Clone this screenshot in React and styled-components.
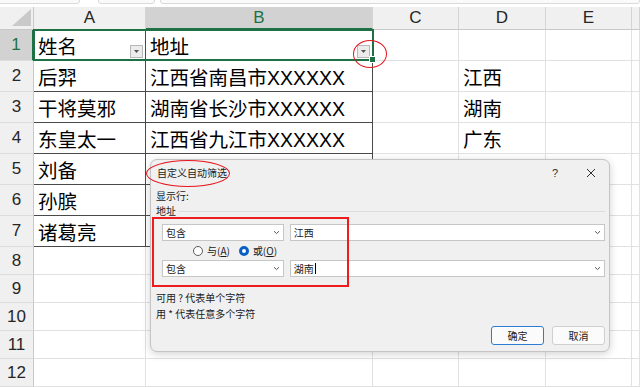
import React from "react";
import styled, { createGlobalStyle, css } from "styled-components";

const Global = createGlobalStyle`
  html, body { margin: 0; padding: 0; background: #fff; }
  body { width: 640px; height: 387px; overflow: hidden; }
`;

const Page = styled.div`
  position: relative;
  width: 640px;
  height: 387px;
  overflow: hidden;
  font-family: "Liberation Sans", "Noto Sans CJK SC", sans-serif;
`;

const TopStrip = styled.div`
  height: 7px;
  display: flex;
  gap: 5px;
  background: #fff;
  overflow: hidden;
`;

const StripBox = styled.div`
  width: ${(p) => p.$w}px;
  flex: ${(p) => (p.$w ? "none" : 1)};
  height: 5px;
  margin-top: -3px;
  border: 1px solid #dadada;
  border-radius: 3px;
  background: #fafafa;
  margin-left: ${(p) => p.$ml || 0}px;
`;

const SheetWrap = styled.div`
  position: relative;
`;

const Sheet = styled.div`
  display: grid;
  grid-template-columns: 34px 112px 227px 86px 87px 86px 1fr;
  grid-template-rows: 23px repeat(7, 31px) repeat(5, 28px);
`;

const Corner = styled.div`
  background: #f0f0f0;
  border-right: 1px solid #c8c8c8;
  border-bottom: 1px solid #c8c8c8;
  position: relative;
  &::after {
    content: "";
    position: absolute;
    right: 2px;
    bottom: 3px;
    border-left: 19px solid transparent;
    border-bottom: 17px solid #c9c9c9;
  }
`;

const ColHead = styled.div`
  display: flex;
  align-items: center;
  justify-content: center;
  font-size: 17px;
  color: #262626;
  background: #f0f0f0;
  border-right: 1px solid #d4d4d4;
  border-bottom: 1px solid #c8c8c8;
  ${(p) =>
    p.$active &&
    css`
      background: #d2d2d2;
      color: #1e7145;
      border-bottom: 2px solid #1e7145;
    `}
`;

const RowHead = styled.div`
  display: flex;
  align-items: center;
  justify-content: center;
  font-size: 17px;
  color: #262626;
  background: #f0f0f0;
  border-right: 1px solid #c8c8c8;
  border-bottom: 1px solid #dcdcdc;
  ${(p) =>
    p.$active &&
    css`
      background: #d2d2d2;
      color: #1e7145;
      border-right: 2px solid #1e7145;
    `}
`;

const Cell = styled.div`
  display: flex;
  align-items: center;
  padding-left: 4px;
  font-size: 19.5px;
  color: #000;
  white-space: nowrap;
  overflow: hidden;
  border-right: 1px solid #e1e1e1;
  border-bottom: 1px solid #e1e1e1;
  ${(p) =>
    p.$boxed &&
    css`
      border-right-color: #4a4a4a;
      border-bottom-color: #4a4a4a;
    `}
`;

/* green outline of the selected range A1:B1, drawn over the cells */
const Selection = styled.div`
  position: absolute;
  left: 33px;
  top: 22px;
  width: 341px;
  height: 32px;
  box-sizing: border-box;
  border: 2px solid #1e7145;
  pointer-events: none;
  &::after {
    content: "";
    position: absolute;
    right: -4px;
    bottom: -4px;
    width: 5px;
    height: 5px;
    background: #1e7145;
    border: 1px solid #fff;
  }
`;

const FilterBtn = styled.span`
  margin-left: auto;
  margin-right: 2px;
  align-self: flex-end;
  margin-bottom: 2px;
  width: 11px;
  height: 11px;
  flex-shrink: 0;
  border: 1px solid #b8b8b8;
  background: #ececec;
  display: flex;
  align-items: center;
  justify-content: center;
`;

const Ellipse = styled.div`
  position: absolute;
  border: 1.5px solid #e8141c;
  border-radius: 50%;
  pointer-events: none;
`;

const RedBox = styled.div`
  position: absolute;
  left: 152px;
  top: 217px;
  width: 197px;
  height: 70px;
  box-sizing: border-box;
  border: 2px solid #ee1c1c;
  pointer-events: none;
`;

const Dialog = styled.div`
  position: absolute;
  left: 150px;
  top: 159px;
  width: 460px;
  height: 193px;
  box-sizing: border-box;
  background: #f0f0f0;
  border: 1px solid #c4c4c4;
  border-radius: 7px;
  box-shadow: 0 2px 8px rgba(0, 0, 0, 0.18);
  font-family: "Noto Sans CJK SC", sans-serif;
  font-size: 10px;
  color: #1a1a1a;
  display: flex;
  flex-direction: column;
`;

const TitleBar = styled.div`
  height: 25px;
  display: flex;
  align-items: center;
  padding: 0 0 0 6px;
`;

const Title = styled.span`
  flex: 1;
`;

const TitleBtn = styled.span`
  width: 36px;
  display: flex;
  justify-content: center;
  color: #333;
  font-family: "Liberation Sans", sans-serif;
  font-size: 11px;
`;

const Body = styled.div`
  flex: 1;
  display: flex;
  flex-direction: column;
  padding: 0 4px 6px 5px;
`;

const Label = styled.div`
  height: 15px;
  line-height: 15px;
  margin-top: ${(p) => p.$top || 0}px;
`;

const Group = styled.div`
  display: flex;
  align-items: center;
  gap: 3px;
  height: 15px;
  &::after {
    content: "";
    flex: 1;
    height: 1px;
    background: #dcdcdc;
    margin-top: 1px;
  }
`;

const CondRow = styled.div`
  display: flex;
  gap: 6px;
  padding-left: 6px;
  margin-top: ${(p) => p.$top}px;
`;

const Combo = styled.div`
  width: ${(p) => p.$w}px;
  height: 17px;
  box-sizing: border-box;
  background: #fff;
  border: 1px solid #c6c6c6;
  display: flex;
  align-items: center;
  padding-left: 3px;
  font-size: 10px;
`;

const ComboText = styled.span`
  flex: 1;
  display: flex;
  align-items: center;
`;

const Caret = styled.span`
  width: 1px;
  height: 11px;
  background: #000;
  margin-left: 1px;
`;

const RadioRow = styled.div`
  display: flex;
  align-items: center;
  gap: 9px;
  padding-left: 37px;
  height: 19px;
`;

const RadioItem = styled.label`
  display: flex;
  align-items: center;
  gap: 4px;
`;

const RadioDot = styled.span`
  width: 10px;
  height: 10px;
  box-sizing: border-box;
  border-radius: 50%;
  border: 1px solid #5c5c5c;
  background: #fff;
  ${(p) =>
    p.$on &&
    css`
      border: 3.5px solid #0a5fc4;
      background: #fff;
    `}
`;

const Footer = styled.div`
  margin-top: auto;
  display: flex;
  justify-content: flex-end;
  gap: 8px;
`;

const Button = styled.button`
  width: 53px;
  height: 19px;
  box-sizing: border-box;
  border-radius: 3px;
  background: #fbfbfb;
  border: 1px solid ${(p) => (p.$primary ? "#2c7cd4" : "#cfcfcf")};
  font-family: "Noto Sans CJK SC", sans-serif;
  font-size: 10px;
  color: #1a1a1a;
  padding: 0;
`;

function Chevron() {
  return (
    <svg width="7" height="5" viewBox="0 0 7 5" style={{ marginRight: 3 }}>
      <path d="M1 1.2 L3.5 3.6 L6 1.2" fill="none" stroke="#555" strokeWidth="1" />
    </svg>
  );
}

function FilterArrow() {
  return (
    <svg width="5" height="3" viewBox="0 0 5 3">
      <path d="M0 0 H5 L2.5 3 Z" fill="#555" />
    </svg>
  );
}

const cols = ["A", "B", "C", "D", "E", ""];

const rows = [
  ["姓名", "地址", "", ""],
  ["后羿", "江西省南昌市XXXXXX", "", "江西"],
  ["干将莫邪", "湖南省长沙市XXXXXX", "", "湖南"],
  ["东皇太一", "江西省九江市XXXXXX", "", "广东"],
  ["刘备", "", "", ""],
  ["孙膑", "", "", ""],
  ["诸葛亮", "", "", ""],
];

export default function App() {
  return (
    <Page>
      <Global />
      <TopStrip>
        <StripBox $w={82} $ml={-4} />
        <StripBox $w={55} $ml={13} />
        <StripBox />
      </TopStrip>
      <SheetWrap>
        <Sheet>
          <Corner />
          {cols.map((c, i) => (
            <ColHead key={i} $active={c === "B"}>
              {c}
            </ColHead>
          ))}
          {Array.from({ length: 12 }).map((_, r) => {
            const data = rows[r] || ["", "", "", ""];
            return (
              <React.Fragment key={r}>
                <RowHead $active={r === 0}>{r + 1}</RowHead>
                <Cell $boxed={r < 7}>
                  {data[0]}
                  {r === 0 && (
                    <FilterBtn>
                      <FilterArrow />
                    </FilterBtn>
                  )}
                </Cell>
                <Cell $boxed={r < 7}>
                  {data[1]}
                  {r === 0 && (
                    <FilterBtn>
                      <FilterArrow />
                    </FilterBtn>
                  )}
                </Cell>
                <Cell>{data[2]}</Cell>
                <Cell>{data[3]}</Cell>
                <Cell />
                <Cell />
              </React.Fragment>
            );
          })}
        </Sheet>
        <Selection />
      </SheetWrap>

      <Ellipse style={{ left: 353, top: 40, width: 32, height: 26 }} />

      <Dialog>
        <TitleBar>
          <Title>自定义自动筛选</Title>
          <TitleBtn>?</TitleBtn>
          <TitleBtn>
            <svg width="10" height="10" viewBox="0 0 10 10">
              <path d="M1 1 L9 9 M9 1 L1 9" stroke="#333" strokeWidth="1" />
            </svg>
          </TitleBtn>
        </TitleBar>
        <Body>
          <Label $top={3}>显示行:</Label>
          <Group>地址</Group>
          <CondRow $top={6}>
            <Combo $w={122}>
              <ComboText>包含</ComboText>
              <Chevron />
            </Combo>
            <Combo $w={316}>
              <ComboText>江西</ComboText>
              <Chevron />
            </Combo>
          </CondRow>
          <RadioRow>
            <RadioItem>
              <RadioDot />
              <span>
                与(<u>A</u>)
              </span>
            </RadioItem>
            <RadioItem>
              <RadioDot $on />
              <span>
                或(<u>O</u>)
              </span>
            </RadioItem>
          </RadioRow>
          <CondRow $top={0}>
            <Combo $w={122}>
              <ComboText>包含</ComboText>
              <Chevron />
            </Combo>
            <Combo $w={316}>
              <ComboText>
                湖南
                <Caret />
              </ComboText>
              <Chevron />
            </Combo>
          </CondRow>
          <Label $top={13}>可用 ? 代表单个字符</Label>
          <Label $top={1}>用 * 代表任意多个字符</Label>
          <Footer>
            <Button $primary>确定</Button>
            <Button>取消</Button>
          </Footer>
        </Body>
      </Dialog>

      <Ellipse style={{ left: 146, top: 160, width: 82, height: 25 }} />
      <RedBox />
    </Page>
  );
}
